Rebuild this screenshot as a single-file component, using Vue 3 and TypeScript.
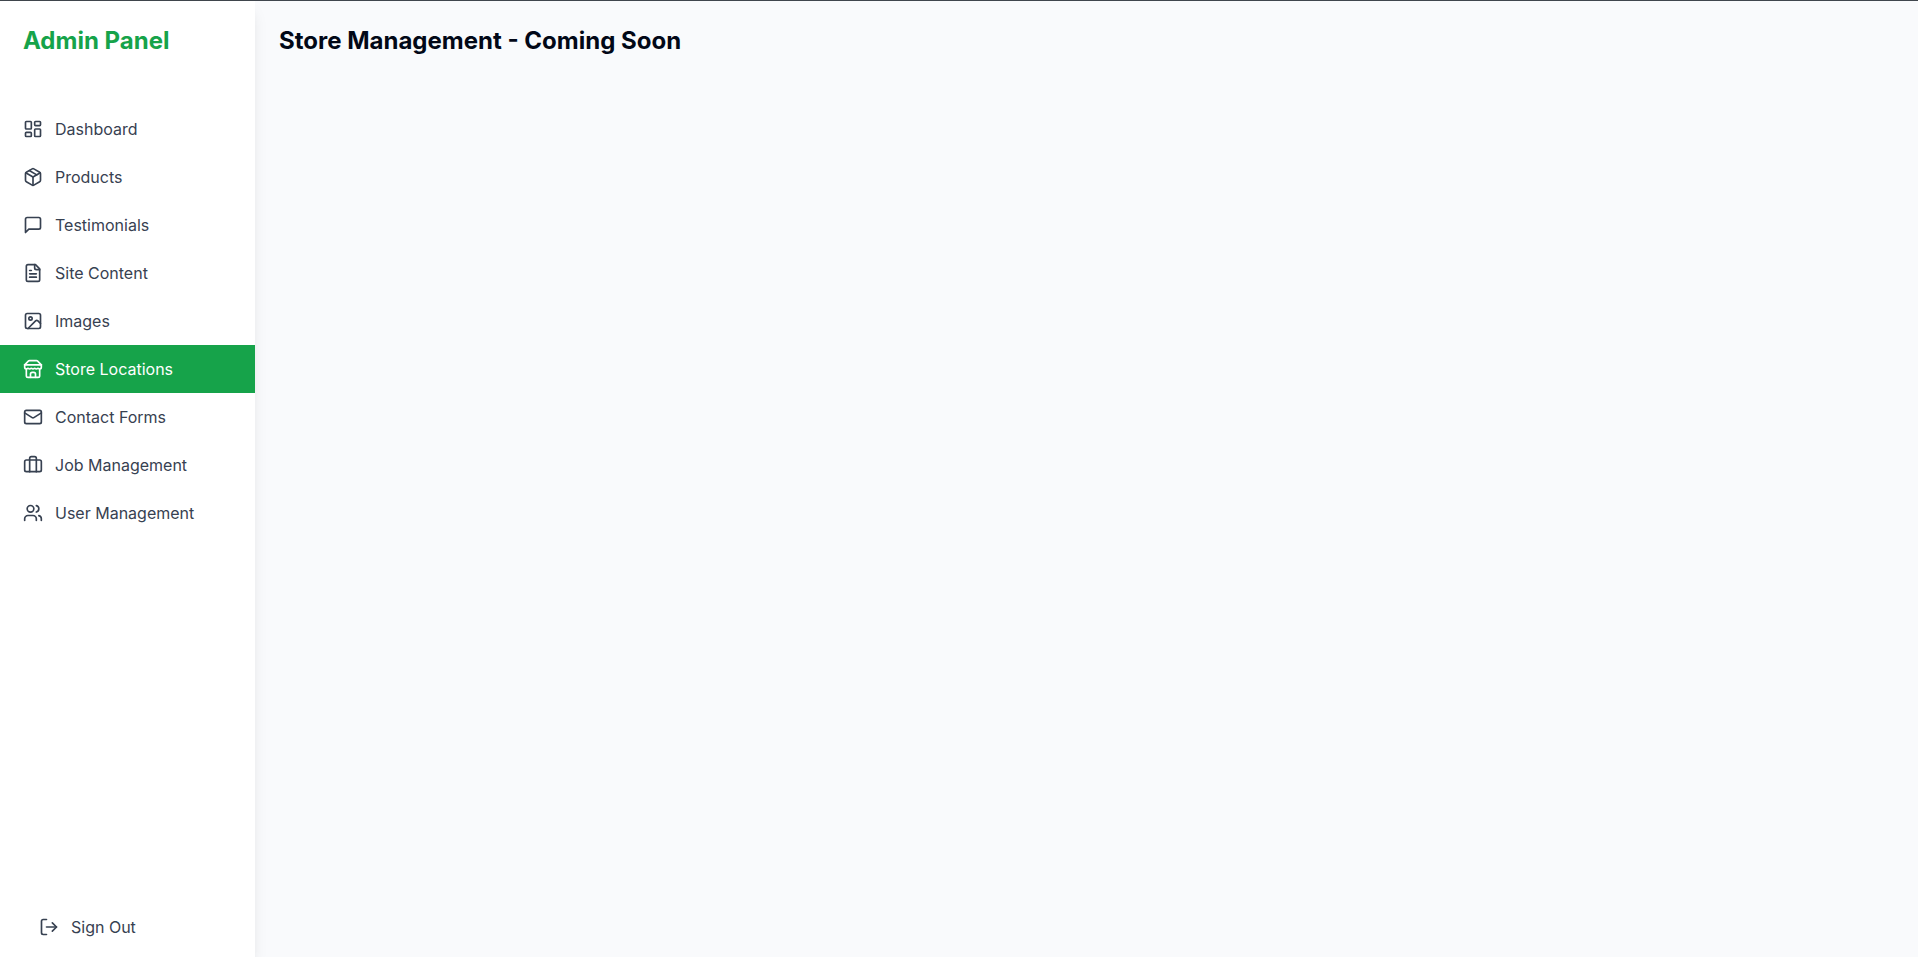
<script setup lang="ts">
import { ref } from 'vue'

interface NavItem {
  label: string
  href: string
  paths: string[]
}

const items: NavItem[] = [
  {
    label: 'Dashboard',
    href: '#dashboard',
    paths: [
      'M4 3h5a1 1 0 0 1 1 1v7a1 1 0 0 1-1 1H4a1 1 0 0 1-1-1V4a1 1 0 0 1 1-1z',
      'M15 3h5a1 1 0 0 1 1 1v3a1 1 0 0 1-1 1h-5a1 1 0 0 1-1-1V4a1 1 0 0 1 1-1z',
      'M15 12h5a1 1 0 0 1 1 1v7a1 1 0 0 1-1 1h-5a1 1 0 0 1-1-1v-7a1 1 0 0 1 1-1z',
      'M4 16h5a1 1 0 0 1 1 1v3a1 1 0 0 1-1 1H4a1 1 0 0 1-1-1v-3a1 1 0 0 1 1-1z',
    ],
  },
  {
    label: 'Products',
    href: '#products',
    paths: [
      'm7.5 4.27 9 5.15',
      'M21 8a2 2 0 0 0-1-1.73l-7-4a2 2 0 0 0-2 0l-7 4A2 2 0 0 0 3 8v8a2 2 0 0 0 1 1.73l7 4a2 2 0 0 0 2 0l7-4A2 2 0 0 0 21 16Z',
      'm3.3 7 8.7 5 8.7-5',
      'M12 22V12',
    ],
  },
  {
    label: 'Testimonials',
    href: '#testimonials',
    paths: ['M21 15a2 2 0 0 1-2 2H7l-4 4V5a2 2 0 0 1 2-2h14a2 2 0 0 1 2 2z'],
  },
  {
    label: 'Site Content',
    href: '#content',
    paths: [
      'M15 2H6a2 2 0 0 0-2 2v16a2 2 0 0 0 2 2h12a2 2 0 0 0 2-2V7Z',
      'M14 2v4a2 2 0 0 0 2 2h4',
      'M10 9H8',
      'M16 13H8',
      'M16 17H8',
    ],
  },
  {
    label: 'Images',
    href: '#images',
    paths: [
      'M5 3h14a2 2 0 0 1 2 2v14a2 2 0 0 1-2 2H5a2 2 0 0 1-2-2V5a2 2 0 0 1 2-2z',
      'M7 9a2 2 0 1 0 4 0a2 2 0 1 0-4 0',
      'm21 15-3.086-3.086a2 2 0 0 0-2.828 0L6 21',
    ],
  },
  {
    label: 'Store Locations',
    href: '#stores',
    paths: [
      'm2 7 4.41-4.41A2 2 0 0 1 7.83 2h8.34a2 2 0 0 1 1.42.59L22 7',
      'M4 12v8a2 2 0 0 0 2 2h12a2 2 0 0 0 2-2v-8',
      'M15 22v-4a2 2 0 0 0-2-2h-2a2 2 0 0 0-2 2v4',
      'M2 7h20',
      'M22 7v3a2 2 0 0 1-2 2a2.7 2.7 0 0 1-1.59-.63.7.7 0 0 0-.82 0A2.7 2.7 0 0 1 16 12a2.7 2.7 0 0 1-1.59-.63.7.7 0 0 0-.82 0A2.7 2.7 0 0 1 12 12a2.7 2.7 0 0 1-1.59-.63.7.7 0 0 0-.82 0A2.7 2.7 0 0 1 8 12a2.7 2.7 0 0 1-1.59-.63.7.7 0 0 0-.82 0A2.7 2.7 0 0 1 4 12a2 2 0 0 1-2-2V7',
    ],
  },
  {
    label: 'Contact Forms',
    href: '#contact',
    paths: [
      'M4 4h16a2 2 0 0 1 2 2v12a2 2 0 0 1-2 2H4a2 2 0 0 1-2-2V6a2 2 0 0 1 2-2z',
      'm22 7-8.97 5.7a1.94 1.94 0 0 1-2.06 0L2 7',
    ],
  },
  {
    label: 'Job Management',
    href: '#jobs',
    paths: [
      'M8 20V4a2 2 0 0 1 2-2h4a2 2 0 0 1 2 2v16',
      'M4 6h16a2 2 0 0 1 2 2v10a2 2 0 0 1-2 2H4a2 2 0 0 1-2-2V8a2 2 0 0 1 2-2z',
    ],
  },
  {
    label: 'User Management',
    href: '#users',
    paths: [
      'M16 21v-2a4 4 0 0 0-4-4H6a4 4 0 0 0-4 4v2',
      'M5 7a4 4 0 1 0 8 0a4 4 0 1 0-8 0',
      'M22 21v-2a4 4 0 0 0-3-3.87',
      'M16 3.13a4 4 0 0 1 0 7.75',
    ],
  },
]

const signOutPaths = ['M9 21H5a2 2 0 0 1-2-2V5a2 2 0 0 1 2-2h4', 'm16 17 5-5-5-5', 'M21 12H9']

const active = ref('Store Locations')
</script>

<template>
  <div class="layout">
    <aside class="sidebar">
      <h1 class="brand">Admin Panel</h1>
      <nav class="nav" aria-label="Admin">
        <a
          v-for="item in items"
          :key="item.label"
          :href="item.href"
          class="nav-link"
          :class="{ active: item.label === active }"
          :aria-current="item.label === active ? 'page' : undefined"
          @click="active = item.label"
        >
          <svg class="icon" viewBox="0 0 24 24" aria-hidden="true">
            <path v-for="d in item.paths" :key="d" :d="d" />
          </svg>
          <span>{{ item.label }}</span>
        </a>
      </nav>
      <div class="footer">
        <button type="button" class="sign-out">
          <svg class="icon" viewBox="0 0 24 24" aria-hidden="true">
            <path v-for="d in signOutPaths" :key="d" :d="d" />
          </svg>
          <span>Sign Out</span>
        </button>
      </div>
    </aside>
    <main class="main">
      <h2 class="title">Store Management - Coming Soon</h2>
    </main>
  </div>
</template>

<style>
body {
  margin: 0;
  background: #f9fafb;
}
</style>

<style scoped>
.layout {
  box-sizing: border-box;
  display: flex;
  min-height: 100vh;
  border-top: 1px solid #40464d;
  background: #f9fafc;
  color: #020817;
  font-family: Inter, 'Liberation Sans', sans-serif;
  font-size: 16px;
  line-height: 24px;
}

.sidebar {
  display: flex;
  flex: 0 0 255px;
  flex-direction: column;
  background: #ffffff;
  box-shadow:
    0 10px 15px -3px rgb(0 0 0 / 0.1),
    0 4px 6px -4px rgb(0 0 0 / 0.1);
}

.brand,
.title {
  margin: 0;
  font-size: 24px;
  font-weight: 700;
  line-height: 32px;
}

.brand {
  padding: 24px 23px;
  color: #16a34a;
}

.nav {
  display: flex;
  flex-direction: column;
  margin-top: 24px;
}

.nav-link {
  display: flex;
  align-items: center;
  gap: 12px;
  padding: 12px 23px;
  color: #374151;
  text-decoration: none;
}

.nav-link:not(.active):hover,
.sign-out:hover {
  background: #f3f4f6;
}

.nav-link.active {
  background: #16a34a;
  color: #ffffff;
}

.icon {
  flex: none;
  width: 20px;
  height: 20px;
  fill: none;
  stroke: currentColor;
  stroke-width: 2;
  stroke-linecap: round;
  stroke-linejoin: round;
}

.footer {
  margin-top: auto;
  padding: 10px 23px;
}

.sign-out {
  display: flex;
  align-items: center;
  gap: 12px;
  width: 100%;
  padding: 8px 16px;
  border: 0;
  border-radius: 6px;
  background: none;
  color: #374151;
  font: inherit;
  cursor: pointer;
}

.main {
  flex: 1;
  min-width: 0;
  padding: 24px;
}
</style>
